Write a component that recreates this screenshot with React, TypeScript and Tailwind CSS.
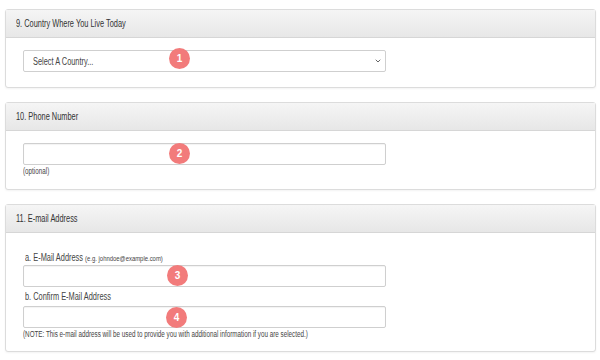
import { ChevronDown } from "lucide-react";
import type { ReactNode } from "react";

// squeezed text, the screenshot is compressed horizontally
const Sq = ({ children, className = "" }: { children: ReactNode; className?: string }) => (
  <span className={`inline-block origin-left scale-x-[0.74] whitespace-nowrap ${className}`}>{children}</span>
);

const Badge = ({ n, className }: { n: number; className: string }) => (
  <div
    className={`absolute flex size-[21px] items-center justify-center rounded-full bg-[#f27b7b] text-[10px] font-bold text-white ${className}`}
  >
    {n}
  </div>
);

const Panel = ({ title, children }: { title: string; children: ReactNode }) => (
  <div className="rounded-[3px] border border-[#dcdcdc] bg-white shadow-[0_1px_2px_rgba(0,0,0,0.05)]">
    <div className="flex h-[28px] items-center border-b border-[#d6d6d6] bg-gradient-to-b from-[#f5f5f5] to-[#e7e7e7] px-[10px] text-[10px] text-[#333]">
      <Sq>{title}</Sq>
    </div>
    <div className="px-[17px]">{children}</div>
  </div>
);

const Field = ({ badge, badgeClass }: { badge: number; badgeClass: string }) => (
  <div className="relative h-[22px] w-[363px] rounded-[2px] border border-[#cfcfcf] bg-white shadow-[inset_0_1px_1px_rgba(0,0,0,0.05)]">
    <Badge n={badge} className={badgeClass} />
  </div>
);

export default function App() {
  return (
    <div className="flex h-[360px] w-[600px] flex-col gap-[14px] bg-white pl-[5px] pr-[4px] pt-[9px] font-['Liberation_Sans',Arial,sans-serif]">
      <Panel title="9. Country Where You Live Today">
        <div className="pb-[15px] pt-[12px]">
          <div className="relative flex h-[22px] w-[363px] items-center justify-between rounded-[2px] border border-[#cfcfcf] bg-white pl-[9px] pr-[3px] text-[10px] text-[#444]">
            <Sq>Select A Country...</Sq>
            <ChevronDown className="size-[8px] text-[#666]" strokeWidth={3} />
            <Badge n={1} className="left-[145px] top-[-3px]" />
          </div>
        </div>
      </Panel>

      <Panel title="10. Phone Number">
        <div className="pb-[12px] pt-[12px]">
          <Field badge={2} badgeClass="left-[145px] top-[-1px]" />
          <div className="mt-px h-[11px] text-[8.5px] leading-[11px] text-[#444]">
            <Sq>(optional)</Sq>
          </div>
        </div>
      </Panel>

      <Panel title="11. E-mail Address">
        <div className="pb-[11px] pt-[17px]">
          <div className="flex h-[15px] items-center pl-[2px] text-[10px] text-[#444]">
            <Sq>
              a. E-Mail Address <span className="text-[8px]">(e.g. johndoe@example.com)</span>
            </Sq>
          </div>
          <Field badge={3} badgeClass="left-[143px] top-[-1px]" />
          <div className="flex h-[19px] items-center pl-[2px] text-[10px] text-[#444]">
            <Sq>b. Confirm E-Mail Address</Sq>
          </div>
          <Field badge={4} badgeClass="left-[142px] top-[0px]" />
          <div className="mt-px h-[11px] text-[8.5px] leading-[11px] text-[#444]">
            <Sq>(NOTE: This e-mail address will be used to provide you with additional information if you are selected.)</Sq>
          </div>
        </div>
      </Panel>
    </div>
  );
}
